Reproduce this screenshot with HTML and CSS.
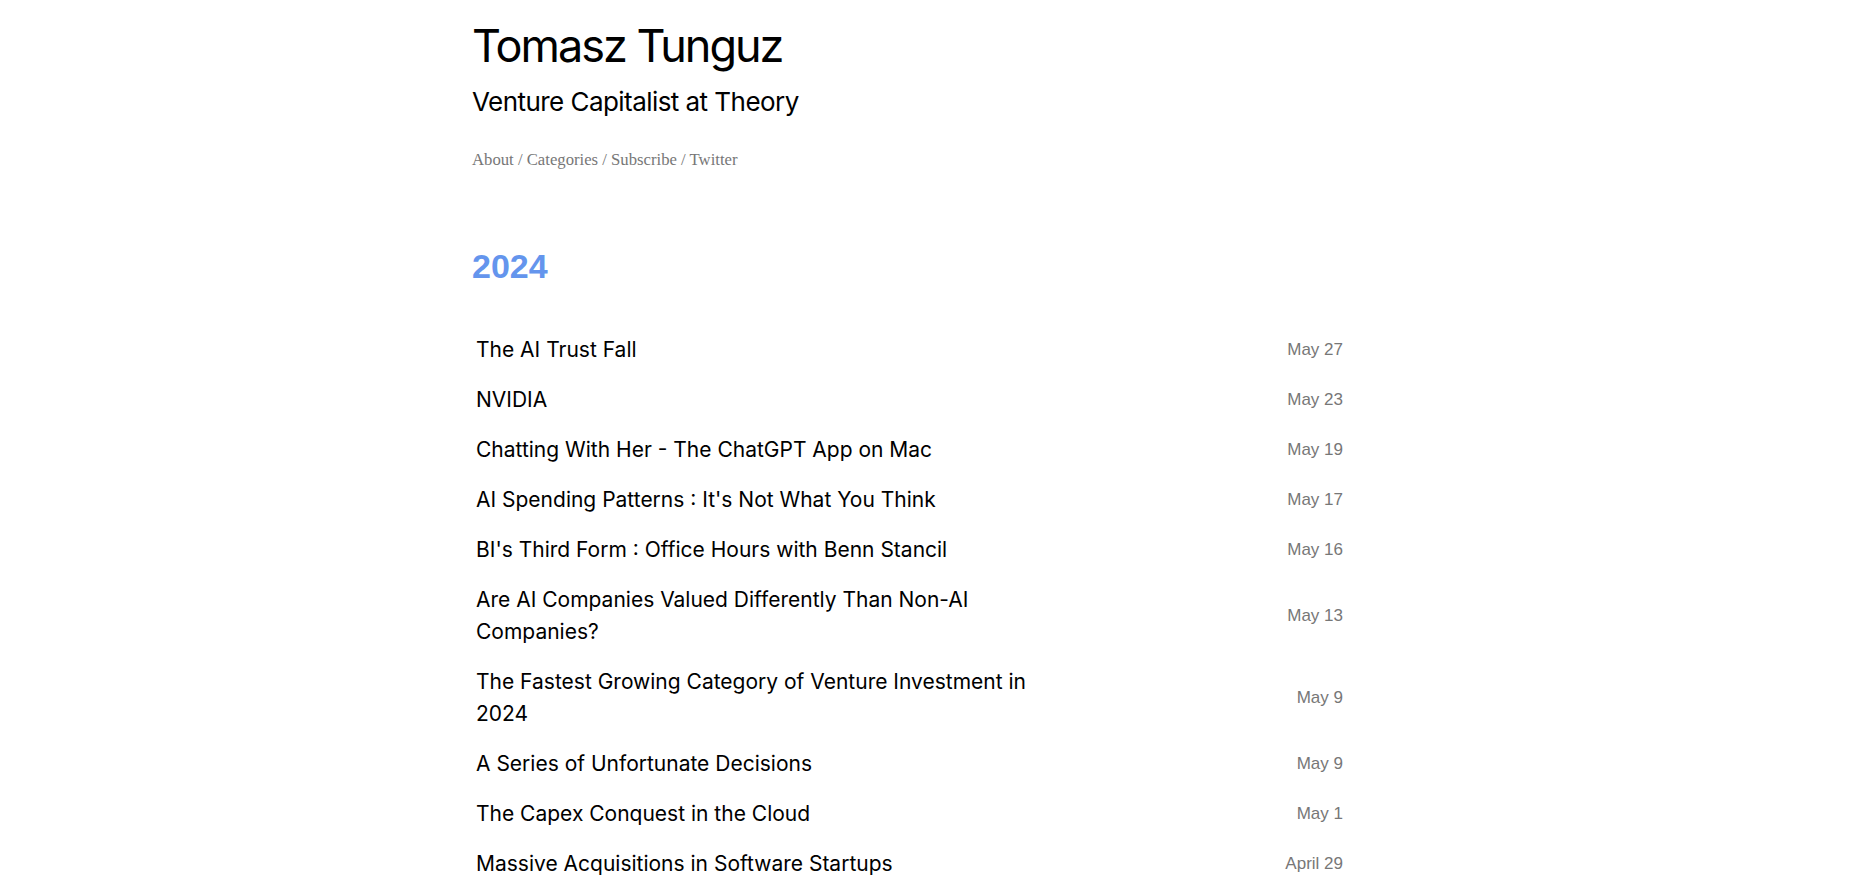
FILE: index.html
```html
<!DOCTYPE html>
<html lang="en">
<head>
<meta charset="utf-8">
<title>Tomasz Tunguz</title>
<link rel="stylesheet" href="styles.css">
</head>
<body>
<div class="page">
  <header class="masthead">
    <h1 class="site-title">Tomasz Tunguz</h1>
    <p class="tagline">Venture Capitalist at Theory</p>
    <nav class="nav">
      <a href="#">About</a> / <a href="#">Categories</a> / <a href="#">Subscribe</a> / <a href="#">Twitter</a>
    </nav>
  </header>
  <section class="year">
    <h2 class="year-title">2024</h2>
    <ul class="posts">
      <li class="post"><a class="post-title" href="#">The AI Trust Fall</a><span class="post-date">May 27</span></li>
      <li class="post"><a class="post-title" href="#">NVIDIA</a><span class="post-date">May 23</span></li>
      <li class="post"><a class="post-title" href="#">Chatting With Her - The ChatGPT App on Mac</a><span class="post-date">May 19</span></li>
      <li class="post"><a class="post-title" href="#">AI Spending Patterns : It's Not What You Think</a><span class="post-date">May 17</span></li>
      <li class="post"><a class="post-title" href="#">BI's Third Form : Office Hours with Benn Stancil</a><span class="post-date">May 16</span></li>
      <li class="post"><a class="post-title" href="#">Are AI Companies Valued Differently Than Non-AI Companies?</a><span class="post-date">May 13</span></li>
      <li class="post"><a class="post-title" href="#">The Fastest Growing Category of Venture Investment in 2024</a><span class="post-date">May 9</span></li>
      <li class="post"><a class="post-title" href="#">A Series of Unfortunate Decisions</a><span class="post-date">May 9</span></li>
      <li class="post"><a class="post-title" href="#">The Capex Conquest in the Cloud</a><span class="post-date">May 1</span></li>
      <li class="post"><a class="post-title" href="#">Massive Acquisitions in Software Startups</a><span class="post-date">April 29</span></li>
    </ul>
  </section>
</div>
</body>
</html>
```
FILE: styles.css
```css
html, body {
  margin: 0;
  padding: 0;
  background: #fff;
}
body {
  font-family: "Inter", "Liberation Sans", sans-serif;
  color: #000;
}
a {
  color: inherit;
  text-decoration: none;
}
.page {
  width: 907px;
  margin: 0 auto;
  padding-top: 19px;
}
.site-title {
  margin: 0;
  font-size: 45px;
  font-weight: 400;
  line-height: 54px;
  letter-spacing: -2px;
}
.tagline {
  margin: 12px 0 0;
  font-size: 26px;
  line-height: 34px;
  letter-spacing: -0.55px;
}
.nav {
  margin-top: 31px;
  font-family: "Liberation Serif", serif;
  font-size: 16.7px;
  line-height: 19px;
  color: #777;
}
.year {
  margin-top: 77px;
}
.year-title {
  margin: 0;
  font-family: "Liberation Sans", sans-serif;
  font-size: 34px;
  line-height: 40px;
  font-weight: 700;
  color: cornflowerblue;
}
.posts {
  list-style: none;
  margin: 39px 0 0;
  padding: 0;
  width: 871px;
}
.post {
  display: flex;
  align-items: center;
  justify-content: space-between;
  padding: 9px 0 9px 4px;
}
.post-title {
  width: 580px;
  font-size: 21px;
  line-height: 32px;
}
.post-date {
  font-family: "Liberation Sans", sans-serif;
  font-size: 17px;
  color: #777;
}
```
